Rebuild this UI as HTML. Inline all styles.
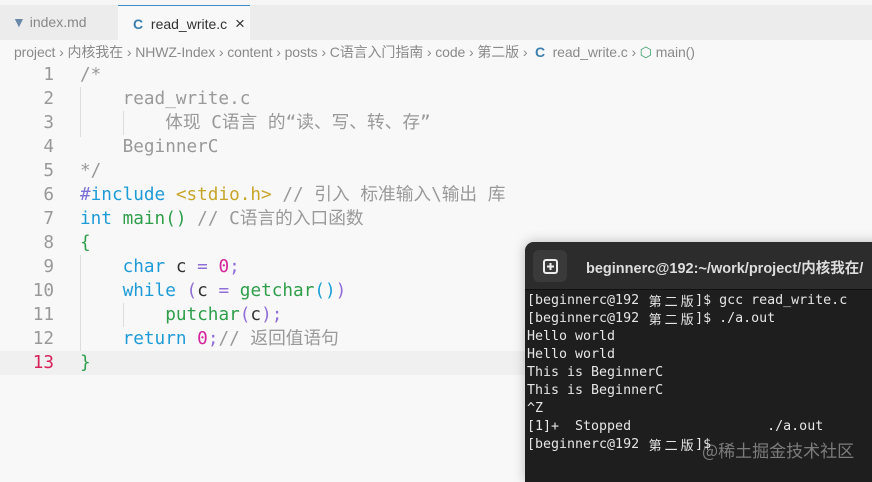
<!DOCTYPE html>
<html><head><meta charset="utf-8"><style>
*{margin:0;padding:0;box-sizing:border-box}
body{width:872px;height:469px;overflow:hidden;background:#f8f8f8;position:relative;font-family:"Liberation Sans","Noto Sans CJK SC",sans-serif}
.tabbar{position:absolute;left:0;top:0;width:872px;height:40px;background:#ececec;border-top:5px solid #f6f6f6}
.tab{position:absolute;top:0;height:35px;font-size:14px;line-height:35px;color:#888}
.t1{left:0;width:117px;padding-left:12px}
.t2{left:118px;width:132px;background:#f8f8f8;border-top:1px solid #3a8fc7;color:#333;padding-left:15px}
.crumb{position:absolute;left:14px;top:42px;font-size:14px;color:#8a8a8a;white-space:nowrap;letter-spacing:-0.1px}
.code{position:absolute;left:0;top:63px;font-family:"DejaVu Sans Mono","Noto Sans CJK SC",monospace;font-size:17.7px;line-height:24px}
.ln{position:absolute;left:0;width:54px;text-align:right;color:#999}
.ln div,.src div{height:24px;white-space:pre}
.src{position:absolute;left:80px;color:#333;width:600px}
.cm{color:#999}.kw{color:#1e9bd7}.pp{color:#7b6fd6}.st{color:#c7a62a}.fn{color:#2e9e4a}.nu{color:#d6259c}.op{color:#8f6ed8}.pa{color:#1aa0d8}
.cur{position:absolute;left:0;top:351px;width:872px;height:24px;background:#f0f0f0}
.guide{position:absolute;width:1px;background:#ddd}
.term{position:absolute;left:525px;top:242px;width:360px;height:240px;background:#1e1e1e;border-radius:9px 0 0 0;box-shadow:0 0 12px rgba(0,0,0,.25)}
.tbar{height:48px;background:#2c2c2c;border-radius:9px 0 0 0;border-bottom:1px solid #111}
.btn{position:absolute;left:8px;top:8px;width:34px;height:32px;background:#3a3a3a;border-radius:6px}
.ttl{position:absolute;left:61px;top:15px;color:#ddd;font-weight:bold;font-size:14.5px;white-space:nowrap}
.tt{position:absolute;left:2px;top:50px;font-family:"DejaVu Sans Mono",monospace;font-size:13.3px;line-height:18px;color:#e6e6e6;white-space:pre}
.tt div{height:18px}
.cj{display:inline-block;width:16px;height:18px;line-height:17px;vertical-align:top;text-align:center;font-family:"Noto Sans CJK SC",sans-serif;font-size:13px}
.wm{position:absolute;left:702px;top:437px;font-size:17px;color:rgba(200,200,200,.55);font-family:"Noto Sans CJK SC",sans-serif}
</style></head><body>
<div class="tabbar">
<div class="tab t1"><span style="color:#6a88aa">&#x25BC;</span> index.md</div>
<div class="tab t2"><b style="color:#3d7fad">C</b>&nbsp; read_write.c &nbsp;<span style="font-size:17px">×</span></div>
</div>
<div class="crumb">project › 内核我在 › NHWZ-Index › content › posts › C语言入门指南 › code › 第二版 › &nbsp;<b style="color:#3d7fad">C</b>&nbsp; read_write.c › <span style="color:#3aa36a">⬡</span> main()</div>
<div class="cur"></div>
<div class="guide" style="left:80px;top:87px;height:50px"></div>
<div class="guide" style="left:123px;top:111px;height:24px"></div>
<div class="guide" style="left:80px;top:255px;height:96px"></div>
<div class="guide" style="left:123px;top:303px;height:24px"></div>
<div class="code">
<div class="ln"><div>1</div><div>2</div><div>3</div><div>4</div><div>5</div><div>6</div><div>7</div><div>8</div><div>9</div><div>10</div><div>11</div><div>12</div><div style="color:#d6245a">13</div></div>
<div class="src"><div class="cm">/*</div><div class="cm">    read_write.c</div><div class="cm">        体现 C语言 的“读、写、转、存”</div><div class="cm">    BeginnerC</div><div class="cm">*/</div><div><span class="pp">#</span><span class="kw">include</span> <span class="st">&lt;stdio.h&gt;</span> <span class="cm">// 引入 标准输入\输出 库</span></div><div><span class="kw">int</span> <span class="fn">main()</span> <span class="cm">// C语言的入口函数</span></div><div class="fn">{</div><div>    <span class="kw">char</span> c <span class="op">=</span> <span class="nu">0</span><span class="op">;</span></div><div>    <span class="kw">while</span> <span class="op">(</span>c <span class="op">=</span> <span class="fn">getchar</span><span class="pa">()</span><span class="op">)</span></div><div>        <span class="fn">putchar</span><span class="op">(</span>c<span class="op">);</span></div><div>    <span class="kw">return</span> <span class="nu">0</span><span class="op">;</span><span class="cm">// 返回值语句</span></div><div class="fn">}</div></div>
</div>
<div class="term">
<div class="tbar"></div>
<div class="btn"><svg width="34" height="32" viewBox="0 0 34 32"><rect x="11" y="10" width="13" height="13" rx="2" fill="none" stroke="#eee" stroke-width="2"/><path d="M17.5 13v7M14 16.5h7" stroke="#eee" stroke-width="2"/></svg></div>
<div class="ttl">beginnerc@192:~/work/project/内核我在/</div>
<div class="tt"><div>[beginnerc@192 <span class="cj">第</span><span class="cj">二</span><span class="cj">版</span>]$ gcc read_write.c</div><div>[beginnerc@192 <span class="cj">第</span><span class="cj">二</span><span class="cj">版</span>]$ ./a.out</div><div>Hello world</div><div>Hello world</div><div>This is BeginnerC</div><div>This is BeginnerC</div><div>^Z</div><div>[1]+  Stopped                 ./a.out</div><div>[beginnerc@192 <span class="cj">第</span><span class="cj">二</span><span class="cj">版</span>]$</div></div>
</div>
<div class="wm">@稀土掘金技术社区</div>
</body></html>
